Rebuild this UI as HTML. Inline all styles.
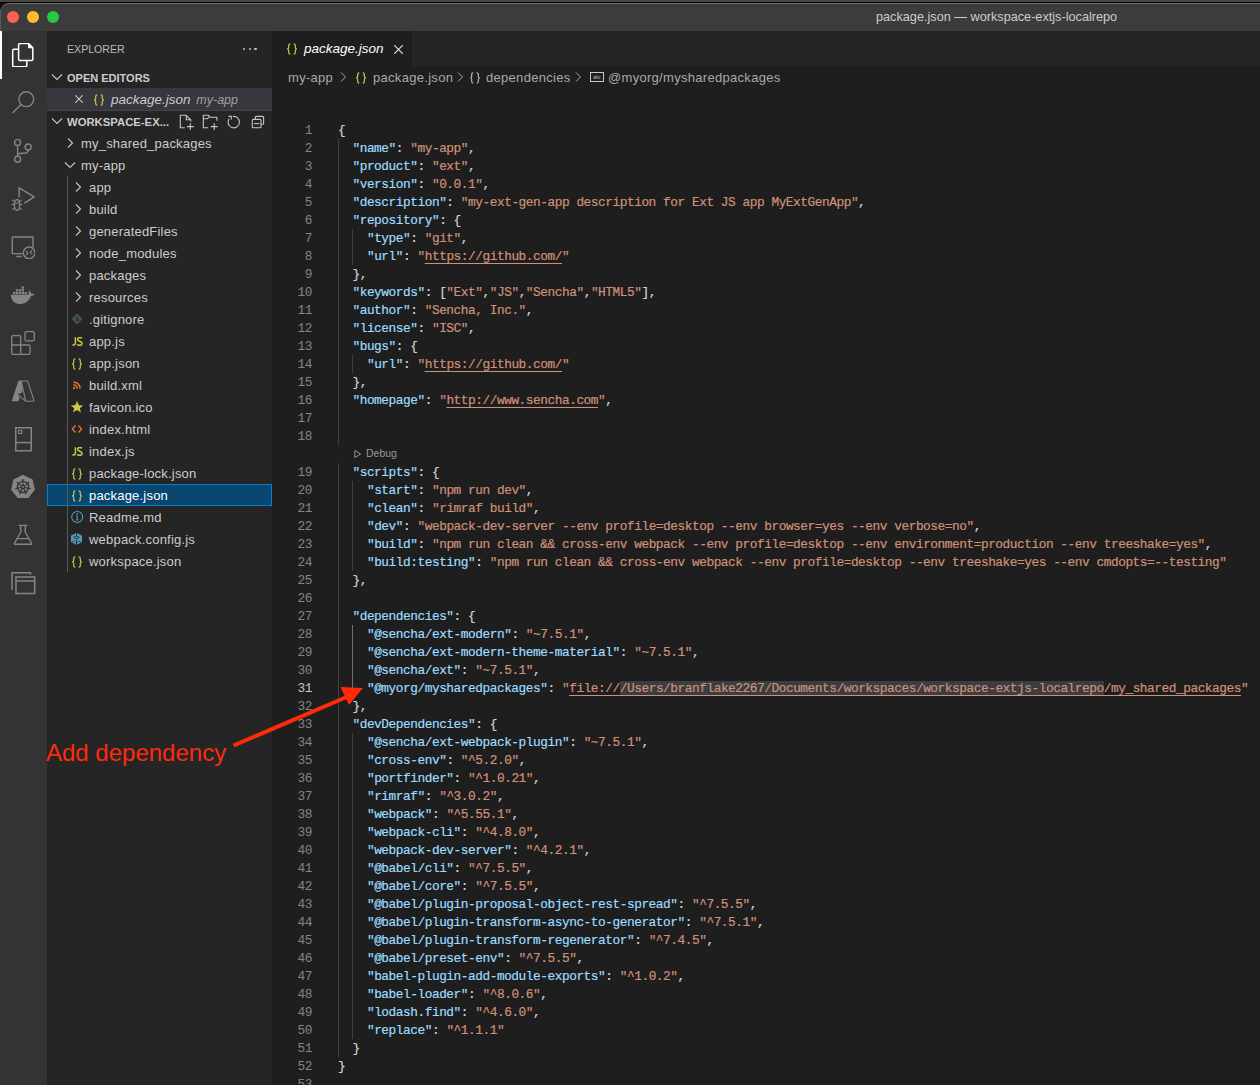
<!DOCTYPE html>
<html><head><meta charset="utf-8">
<style>
*{margin:0;padding:0;box-sizing:border-box}
html,body{width:1260px;height:1085px;overflow:hidden;background:#474747;font-family:"Liberation Sans",sans-serif}
.abs{position:absolute}
#topline{left:0;top:2px;width:1260px;height:1px;background:#000}
#win{left:0;top:3px;width:1260px;height:1082px;background:#3c3c3c;border-top-left-radius:9px;overflow:hidden;border-top:1px solid #6e6e6e;border-left:1px solid #5a5a5a}
#title{left:0;top:3px;width:1260px;height:28px}
.tl{position:absolute;top:8px;width:12px;height:12px;border-radius:50%}
#tt{position:absolute;left:876px;top:7px;font-size:12.7px;color:#cccccc;white-space:nowrap}
#act{left:0;top:31px;width:47px;height:1054px;background:#333333}
#side{left:47px;top:31px;width:225px;height:1054px;background:#252526;color:#cccccc}
#ed{left:272px;top:31px;width:988px;height:1054px;background:#1e1e1e;overflow:hidden}
#tabs{left:0;top:0;width:988px;height:35px;background:#252526}
#tab{left:0;top:0;width:140px;height:35px;background:#1e1e1e}
.row{position:absolute;left:0;height:22px;line-height:22px;font-size:13px;white-space:nowrap}
.ln{position:absolute;left:0;width:40px;text-align:right;font-family:"Liberation Mono",monospace;font-size:12.8px;letter-spacing:-0.456px;color:#858585;height:18px;line-height:18px;padding-top:2px}
.ln.act{color:#c6c6c6}
.cl{position:absolute;left:66px;height:18px;line-height:18px;font-family:"Liberation Mono",monospace;font-size:12.8px;letter-spacing:-0.456px;white-space:pre;color:#d4d4d4;padding-top:2px;-webkit-text-stroke:0.2px currentColor}
.k{color:#9cdcfe}.s{color:#ce9178}.u{text-decoration:underline;text-underline-offset:3px;text-decoration-skip-ink:none}
.sel{background:#3a3d41}
.ig{position:absolute;width:1px;background:#404040}
.ic{position:absolute;font-family:"Liberation Mono",monospace;font-weight:bold}
</style></head><body>
<div id="topline" class="abs"></div>
<div class="abs" style="left:0;top:3px;width:14px;height:14px;background:#111111"></div>
<div id="win" class="abs"></div>
<div id="title" class="abs">
  <div class="tl" style="left:7px;background:#fe5f57"></div>
  <div class="tl" style="left:27px;background:#febc2e"></div>
  <div class="tl" style="left:47px;background:#28c840"></div>
  <div id="tt">package.json — workspace-extjs-localrepo</div>
</div>
<div id="act" class="abs">
<div class="abs" style="left:0;top:0;width:1.5px;height:48px;background:#ffffff"></div>
<svg class="abs" style="left:11px;top:12px" width="24" height="24" viewBox="0 0 24 24" fill="none" stroke="#ffffff" stroke-width="1.5" stroke-linejoin="round"><path d="M7.6 6.3 H2.9 A1.2 1.2 0 0 0 1.7 7.5 V22.6 A1.2 1.2 0 0 0 2.9 23.8 H14.6 A1.2 1.2 0 0 0 15.8 22.6 V17.6"/><path d="M8.8 0.6 H17.6 L21.8 4.8 V16.3 A1.2 1.2 0 0 1 20.6 17.5 H8.8 A1.2 1.2 0 0 1 7.6 16.3 V1.8 A1.2 1.2 0 0 1 8.8 0.6 Z"/><path d="M17.6 0.6 V4.8 H21.8 Z" fill="#ffffff" stroke-width="1"/></svg>
<svg class="abs" style="left:11px;top:60px" width="24" height="24" viewBox="0 0 24 24" fill="none" stroke="#858585" stroke-width="1.4"><circle cx="15.3" cy="8.2" r="7.4"/><path d="M10 13.5 L1.5 22"/></svg>
<svg class="abs" style="left:11px;top:108px" width="24" height="24" viewBox="0 0 24 24" fill="none" stroke="#858585" stroke-width="1.4"><circle cx="6.6" cy="3.4" r="3"/><circle cx="6.6" cy="20.2" r="3"/><circle cx="17.2" cy="8" r="3"/><path d="M6.6 6.4 V17.2 M17.2 11 C17.2 14 15 14.3 11 14.3 C8.5 14.3 6.6 15 6.6 17"/></svg>
<svg class="abs" style="left:11px;top:156px" width="24" height="24" viewBox="0 0 24 24" fill="none" stroke="#858585" stroke-width="1.4"><path d="M8.1 10.6 V0.8 L23.3 9.8 L13.3 16.2"/><path d="M3.3 17.8 C3.3 14.6 4.5 12.8 6 12.8 C7.5 12.8 8.7 14.6 8.7 17.8 C8.7 21 7.5 23.2 6 23.2 C4.5 23.2 3.3 21 3.3 17.8 Z"/><path d="M3.2 17.5 H0.5 M8.8 17.5 H11.5 M3.6 14.6 L1.2 13 M8.4 14.6 L10.8 13 M3.6 21 L1.2 22.8 M8.4 21 L10.8 22.8 M3.8 16 H8.2" stroke-width="1.1"/></svg>
<svg class="abs" style="left:11px;top:204px" width="24" height="24" viewBox="0 0 24 24" fill="none" stroke="#858585" stroke-width="1.4" stroke-linejoin="round"><path d="M11.5 18.6 H1.3 V2 H22 V12.5"/><path d="M5.2 21.5 H10.6"/><circle cx="18.1" cy="17.8" r="5.8"/><path d="M15 16.2 L17 18.2 L15 20.2 M21.2 15.4 L19.2 17.4 L21.2 19.4" stroke-width="1.1"/></svg>
<svg class="abs" style="left:10px;top:252px" width="26" height="24" viewBox="0 0 26 24"><path d="M0.8 11.8 H18.6 C18.4 10.2 18.6 8.5 19.3 7.2 C20.3 8.2 20.8 9.5 20.8 10.6 C22 10.2 23.5 10.5 24.6 11.2 C23.6 12.3 22.2 12.8 21 12.9 C19 18.5 14.8 20.9 9.5 20.9 C4.3 20.9 1.2 17.5 0.8 11.8 Z" fill="#858585"/><g fill="#858585"><rect x="2.9" y="9" width="2.4" height="2.3"/><rect x="5.8" y="9" width="2.4" height="2.3"/><rect x="8.7" y="9" width="2.4" height="2.3"/><rect x="11.6" y="9" width="2.4" height="2.3"/><rect x="14.5" y="9" width="2.4" height="2.3"/><rect x="5.8" y="6.2" width="2.4" height="2.3"/><rect x="8.7" y="6.2" width="2.4" height="2.3"/><rect x="11.6" y="6.2" width="2.4" height="2.3"/><rect x="11.6" y="3.4" width="2.4" height="2.3"/></g></svg>
<svg class="abs" style="left:11px;top:300px" width="24" height="24" viewBox="0 0 24 24" fill="none" stroke="#858585" stroke-width="1.3"><path d="M1.9 4.7 H8.5 A1.2 1.2 0 0 1 9.7 5.9 V14 H17.8 A1.2 1.2 0 0 1 19 15.2 V22.1 A1.2 1.2 0 0 1 17.8 23.3 H1.9 A1.2 1.2 0 0 1 0.7 22.1 V5.9 A1.2 1.2 0 0 1 1.9 4.7 Z M0.7 14 H9.7 V23.3"/><rect x="14" y="0.6" width="9.3" height="9.3" rx="1.5"/></svg>
<svg class="abs" style="left:8px;top:344px" width="30" height="30" viewBox="0 0 30 30"><path d="M10.3 6.2 H13 L14.7 15.5 L13.3 18.2 L9.1 19.1 L11.6 23 L10.3 26.3 H4.6 Q3.7 26.3 4 25.3 Z" fill="#858585"/><path d="M10.5 6 H19.2 Q19.6 6 19.8 6.6 L26 25.5 Q26.2 26.2 25.5 26.2 H17.7 L13.3 6.2 M9.1 19.1 L17.7 26.2" fill="none" stroke="#858585" stroke-width="1.1" stroke-linejoin="round"/></svg>
<svg class="abs" style="left:11px;top:396px" width="24" height="25" viewBox="0 0 24 25" fill="none" stroke="#858585" stroke-width="1.5"><rect x="4.75" y="0.75" width="15.5" height="23"/><path d="M4.75 15.6 H20.25"/><rect x="7.6" y="3.3" width="3.2" height="3.2" stroke-width="1.1"/></svg>
<svg class="abs" style="left:10px;top:443px" width="26" height="26" viewBox="0 0 26 26"><polygon points="13.00,1.60 21.91,5.89 24.11,15.54 17.95,23.27 8.05,23.27 1.89,15.54 4.09,5.89" fill="#858585" stroke="#858585" stroke-width="1.5" stroke-linejoin="round"/><g fill="none" stroke="#333333" stroke-width="1.2"><circle cx="13" cy="13" r="5.6" stroke-width="1.4"/><circle cx="13" cy="13" r="1.6"/><path d="M13.00 11.20 L13.00 5.00 M14.41 11.88 L19.25 8.01 M14.75 13.40 L20.80 14.78 M13.78 14.62 L16.47 20.21 M12.22 14.62 L9.53 20.21 M11.25 13.40 L5.20 14.78 M11.59 11.88 L6.75 8.01 "/></g></svg>
<svg class="abs" style="left:11px;top:492px" width="24" height="24" viewBox="0 0 24 24" fill="none" stroke="#858585" stroke-width="1.4" stroke-linejoin="round"><path d="M7.5 2.4 H16.3 M9.8 2.4 V9 L3.6 20 Q3.1 21.3 4.6 21.3 H19.4 Q20.9 21.3 20.4 20 L14.2 9 V2.4 M6.4 15.6 H17.6"/></svg>
<svg class="abs" style="left:11px;top:540px" width="25" height="24" viewBox="0 0 25 24" fill="none" stroke="#858585" stroke-width="1.5"><path d="M1 18.7 V1.7 H19.5 V3.5"/><rect x="5" y="6" width="18.7" height="16.5"/><path d="M5 10 H23.7"/></svg>
</div><div id="side" class="abs">
<div class="row" style="top:1px;height:35px;line-height:35px;left:20px;font-size:10.6px;color:#bbbbbb">EXPLORER</div>
<div class="abs" style="left:196.0px;top:17px;width:2.4px;height:2.4px;border-radius:50%;background:#c5c5c5"></div>
<div class="abs" style="left:201.6px;top:17px;width:2.4px;height:2.4px;border-radius:50%;background:#c5c5c5"></div>
<div class="abs" style="left:207.2px;top:17px;width:2.4px;height:2.4px;border-radius:50%;background:#c5c5c5"></div>
<svg class="abs" style="left:2px;top:38px" width="16" height="16" viewBox="0 0 16 16"><path d="M3 5.5 L8 10.5 L13 5.5" fill="none" stroke="#c5c5c5" stroke-width="1.1"/></svg>
<div class="row" style="top:36px;left:20px;font-size:11px;font-weight:bold;color:#cccccc">OPEN EDITORS</div>
<div class="abs" style="left:0;top:57px;width:225px;height:22px;background:#37373d"></div>
<div class="abs" style="left:0;top:79px;width:225px;height:1px;background:#444448"></div>
<svg class="abs" style="left:28px;top:64px" width="8" height="8" viewBox="0 0 8 8"><path d="M0.3 0.3 L7.7 7.7 M7.7 0.3 L0.3 7.7" fill="none" stroke="#c5c5c5" stroke-width="1.1"/></svg>
<svg class="abs" style="left:46px;top:63px" width="12" height="12" viewBox="0 0 12 12" fill="none" stroke="#cbcb41" stroke-width="1.2"><path d="M4.3 0.8 C3.1 0.8 2.7 1.4 2.7 2.4 V4.5 C2.7 5.4 2.1 5.9 1.1 6 C2.1 6.1 2.7 6.6 2.7 7.5 V9.6 C2.7 10.6 3.1 11.2 4.3 11.2"/><path d="M7.7 0.8 C8.9 0.8 9.3 1.4 9.3 2.4 V4.5 C9.3 5.4 9.9 5.9 10.9 6 C9.9 6.1 9.3 6.6 9.3 7.5 V9.6 C9.3 10.6 8.9 11.2 7.7 11.2"/></svg>
<div class="row" style="top:58px;left:64px;font-style:italic;font-size:13.5px;color:#cccccc">package.json <span style="font-size:12.5px;color:#a0a0a0;margin-left:2px">my-app</span></div>
<svg class="abs" style="left:2px;top:82px" width="16" height="16" viewBox="0 0 16 16"><path d="M3 5.5 L8 10.5 L13 5.5" fill="none" stroke="#c5c5c5" stroke-width="1.1"/></svg>
<div class="row" style="top:80px;left:20px;font-size:11.3px;font-weight:bold;color:#cccccc">WORKSPACE-EX...</div>
<svg class="abs" style="left:130px;top:82px" width="18" height="18" viewBox="0 0 18 18" fill="none" stroke="#c5c5c5" stroke-width="1.1" stroke-linejoin="round"><path d="M7.8 14.7 H3.3 V2.3 H9.3 L13.8 6.8 V8.6 M9.3 2.3 V6.8 H13.8 M13.3 10.2 V17 M9.9 13.6 H16.8"/></svg>
<svg class="abs" style="left:154px;top:82px" width="18" height="18" viewBox="0 0 18 18" fill="none" stroke="#c5c5c5" stroke-width="1.1" stroke-linejoin="round"><path d="M7.2 14.7 H2.3 V2.3 H7.5 L9 4.2 H15.9 V7.8 M2.3 5.7 H6.5 L8 4.2 M13.2 10.2 V17 M9.8 13.6 H16.6"/></svg>
<svg class="abs" style="left:178px;top:82px" width="18" height="18" viewBox="0 0 18 18" fill="none" stroke="#c5c5c5" stroke-width="1.1"><path d="M7.8 3.5 A5.7 5.7 0 1 1 4.1 5.8 M3.4 3.4 H6.3 V6.5"/></svg>
<svg class="abs" style="left:202px;top:82px" width="18" height="18" viewBox="0 0 18 18" fill="none" stroke="#c5c5c5" stroke-width="1.1"><path d="M6.3 6.4 V4.4 Q6.3 3.4 7.3 3.4 H13.6 Q14.6 3.4 14.6 4.4 V10.3 Q14.6 11.3 13.6 11.3 H12"/><rect x="3.3" y="6.4" width="8.7" height="8.3" rx="1"/><path d="M4.9 10.6 H10.4"/></svg>
<svg class="abs" style="left:15px;top:104px" width="16" height="16" viewBox="0 0 16 16"><path d="M6 3.5 L10.5 8 L6 12.5" fill="none" stroke="#c5c5c5" stroke-width="1.1"/></svg>
<div class="row" style="top:102px;left:34px;color:#cccccc;letter-spacing:0.2px">my_shared_packages</div>
<svg class="abs" style="left:15px;top:126px" width="16" height="16" viewBox="0 0 16 16"><path d="M3 5.5 L8 10.5 L13 5.5" fill="none" stroke="#c5c5c5" stroke-width="1.1"/></svg>
<div class="row" style="top:124px;left:34px;color:#cccccc;letter-spacing:0.2px">my-app</div>
<svg class="abs" style="left:23px;top:148px" width="16" height="16" viewBox="0 0 16 16"><path d="M6 3.5 L10.5 8 L6 12.5" fill="none" stroke="#c5c5c5" stroke-width="1.1"/></svg>
<div class="row" style="top:146px;left:42px;color:#cccccc;letter-spacing:0.2px">app</div>
<svg class="abs" style="left:23px;top:170px" width="16" height="16" viewBox="0 0 16 16"><path d="M6 3.5 L10.5 8 L6 12.5" fill="none" stroke="#c5c5c5" stroke-width="1.1"/></svg>
<div class="row" style="top:168px;left:42px;color:#cccccc;letter-spacing:0.2px">build</div>
<svg class="abs" style="left:23px;top:192px" width="16" height="16" viewBox="0 0 16 16"><path d="M6 3.5 L10.5 8 L6 12.5" fill="none" stroke="#c5c5c5" stroke-width="1.1"/></svg>
<div class="row" style="top:190px;left:42px;color:#cccccc;letter-spacing:0.2px">generatedFiles</div>
<svg class="abs" style="left:23px;top:214px" width="16" height="16" viewBox="0 0 16 16"><path d="M6 3.5 L10.5 8 L6 12.5" fill="none" stroke="#c5c5c5" stroke-width="1.1"/></svg>
<div class="row" style="top:212px;left:42px;color:#cccccc;letter-spacing:0.2px">node_modules</div>
<svg class="abs" style="left:23px;top:236px" width="16" height="16" viewBox="0 0 16 16"><path d="M6 3.5 L10.5 8 L6 12.5" fill="none" stroke="#c5c5c5" stroke-width="1.1"/></svg>
<div class="row" style="top:234px;left:42px;color:#cccccc;letter-spacing:0.2px">packages</div>
<svg class="abs" style="left:23px;top:258px" width="16" height="16" viewBox="0 0 16 16"><path d="M6 3.5 L10.5 8 L6 12.5" fill="none" stroke="#c5c5c5" stroke-width="1.1"/></svg>
<div class="row" style="top:256px;left:42px;color:#cccccc;letter-spacing:0.2px">resources</div>
<svg class="abs" style="left:24px;top:280px" width="12" height="16" viewBox="0 0 12 16"><path d="M6 2.5 L11.5 8 L6 13.5 L0.5 8 Z" fill="#41535b"/><path d="M4.6 5.5 L7.6 8.6 M5.6 6.6 V10.5 M7.6 8.6 V10" stroke="#252526" stroke-width="0.9" fill="none"/></svg>
<div class="row" style="top:278px;left:42px;color:#cccccc;letter-spacing:0.2px">.gitignore</div>
<svg class="abs" style="left:24.5px;top:305.5px" width="11" height="9" viewBox="0 0 11 9" fill="none" stroke="#cbcb41" stroke-width="1.5"><path d="M3.4 0.3 V5.8 C3.4 7.6 2.5 8.2 0.4 8.0"/><path d="M9.9 1.3 C9.3 0.7 8.5 0.5 7.7 0.5 C6.4 0.5 5.5 1.2 5.5 2.3 C5.5 4.6 10.1 3.8 10.1 6.2 C10.1 7.5 9.1 8.3 7.7 8.3 C6.7 8.3 5.8 7.9 5.2 7.2"/></svg>
<div class="row" style="top:300px;left:42px;color:#cccccc;letter-spacing:0.2px">app.js</div>
<svg class="abs" style="left:24px;top:327px" width="12" height="12" viewBox="0 0 12 12" fill="none" stroke="#cbcb41" stroke-width="1.2"><path d="M4.3 0.8 C3.1 0.8 2.7 1.4 2.7 2.4 V4.5 C2.7 5.4 2.1 5.9 1.1 6 C2.1 6.1 2.7 6.6 2.7 7.5 V9.6 C2.7 10.6 3.1 11.2 4.3 11.2"/><path d="M7.7 0.8 C8.9 0.8 9.3 1.4 9.3 2.4 V4.5 C9.3 5.4 9.9 5.9 10.9 6 C9.9 6.1 9.3 6.6 9.3 7.5 V9.6 C9.3 10.6 8.9 11.2 7.7 11.2"/></svg>
<div class="row" style="top:322px;left:42px;color:#cccccc;letter-spacing:0.2px">app.json</div>
<svg class="abs" style="left:24px;top:346px" width="12" height="16" viewBox="0 0 12 16" fill="none" stroke="#e37933" stroke-width="1.5"><path d="M2.5 5.2 A6 6 0 0 1 9 11.7 M2.5 8 A3.4 3.4 0 0 1 6.2 11.7"/><circle cx="3" cy="11.2" r="1.1" fill="#e37933" stroke="none"/></svg>
<div class="row" style="top:344px;left:42px;color:#cccccc;letter-spacing:0.2px">build.xml</div>
<svg class="abs" style="left:23px;top:368px" width="14" height="16" viewBox="0 0 14 16"><path d="M7 2 L8.8 6.2 L13.2 6.4 L9.8 9.2 L11 13.6 L7 11.1 L3 13.6 L4.2 9.2 L0.8 6.4 L5.2 6.2 Z" fill="#cbcb41"/></svg>
<div class="row" style="top:366px;left:42px;color:#cccccc;letter-spacing:0.2px">favicon.ico</div>
<svg class="abs" style="left:24px;top:390px" width="12" height="16" viewBox="0 0 12 16" fill="none" stroke="#e37933" stroke-width="1.3"><path d="M4.5 4.5 L1.3 8 L4.5 11.5 M7.5 4.5 L10.7 8 L7.5 11.5"/></svg>
<div class="row" style="top:388px;left:42px;color:#cccccc;letter-spacing:0.2px">index.html</div>
<svg class="abs" style="left:24.5px;top:415.5px" width="11" height="9" viewBox="0 0 11 9" fill="none" stroke="#cbcb41" stroke-width="1.5"><path d="M3.4 0.3 V5.8 C3.4 7.6 2.5 8.2 0.4 8.0"/><path d="M9.9 1.3 C9.3 0.7 8.5 0.5 7.7 0.5 C6.4 0.5 5.5 1.2 5.5 2.3 C5.5 4.6 10.1 3.8 10.1 6.2 C10.1 7.5 9.1 8.3 7.7 8.3 C6.7 8.3 5.8 7.9 5.2 7.2"/></svg>
<div class="row" style="top:410px;left:42px;color:#cccccc;letter-spacing:0.2px">index.js</div>
<svg class="abs" style="left:24px;top:437px" width="12" height="12" viewBox="0 0 12 12" fill="none" stroke="#cbcb41" stroke-width="1.2"><path d="M4.3 0.8 C3.1 0.8 2.7 1.4 2.7 2.4 V4.5 C2.7 5.4 2.1 5.9 1.1 6 C2.1 6.1 2.7 6.6 2.7 7.5 V9.6 C2.7 10.6 3.1 11.2 4.3 11.2"/><path d="M7.7 0.8 C8.9 0.8 9.3 1.4 9.3 2.4 V4.5 C9.3 5.4 9.9 5.9 10.9 6 C9.9 6.1 9.3 6.6 9.3 7.5 V9.6 C9.3 10.6 8.9 11.2 7.7 11.2"/></svg>
<div class="row" style="top:432px;left:42px;color:#cccccc;letter-spacing:0.2px">package-lock.json</div>
<div class="abs" style="left:0;top:453px;width:225px;height:22px;background:#094771;border:1px solid #007fd4"></div>
<svg class="abs" style="left:24px;top:459px" width="12" height="12" viewBox="0 0 12 12" fill="none" stroke="#cbcb41" stroke-width="1.2"><path d="M4.3 0.8 C3.1 0.8 2.7 1.4 2.7 2.4 V4.5 C2.7 5.4 2.1 5.9 1.1 6 C2.1 6.1 2.7 6.6 2.7 7.5 V9.6 C2.7 10.6 3.1 11.2 4.3 11.2"/><path d="M7.7 0.8 C8.9 0.8 9.3 1.4 9.3 2.4 V4.5 C9.3 5.4 9.9 5.9 10.9 6 C9.9 6.1 9.3 6.6 9.3 7.5 V9.6 C9.3 10.6 8.9 11.2 7.7 11.2"/></svg>
<div class="row" style="top:454px;left:42px;color:#ffffff;letter-spacing:0.2px">package.json</div>
<svg class="abs" style="left:24px;top:478px" width="13" height="16" viewBox="0 0 13 16" fill="none" stroke="#519aba" stroke-width="1.1"><circle cx="6.2" cy="8" r="5.5"/><path d="M6.2 6.8 V11 M5 11 H7.4 M5 6.8 H6.2" /><circle cx="6.2" cy="4.9" r="0.8" fill="#519aba" stroke="none"/></svg>
<div class="row" style="top:476px;left:42px;color:#cccccc;letter-spacing:0.2px">Readme.md</div>
<svg class="abs" style="left:24px;top:500px" width="12" height="16" viewBox="0 0 12 16"><path d="M5.5 1.7 L11 4.8 V11 L5.5 14.1 L0 11 V4.8 Z" fill="#519aba"/><path d="M5.5 1.5 V4.7 M5.5 8.2 V14.3 M2.6 6.4 L5.5 4.9 L8.4 6.4 L5.5 7.9 Z M1.4 10.4 H3.2 M7.8 10.4 H9.6 M4.3 11.3 H6.7" fill="none" stroke="#252526" stroke-width="0.85"/></svg>
<div class="row" style="top:498px;left:42px;color:#cccccc;letter-spacing:0.2px">webpack.config.js</div>
<svg class="abs" style="left:24px;top:525px" width="12" height="12" viewBox="0 0 12 12" fill="none" stroke="#cbcb41" stroke-width="1.2"><path d="M4.3 0.8 C3.1 0.8 2.7 1.4 2.7 2.4 V4.5 C2.7 5.4 2.1 5.9 1.1 6 C2.1 6.1 2.7 6.6 2.7 7.5 V9.6 C2.7 10.6 3.1 11.2 4.3 11.2"/><path d="M7.7 0.8 C8.9 0.8 9.3 1.4 9.3 2.4 V4.5 C9.3 5.4 9.9 5.9 10.9 6 C9.9 6.1 9.3 6.6 9.3 7.5 V9.6 C9.3 10.6 8.9 11.2 7.7 11.2"/></svg>
<div class="row" style="top:520px;left:42px;color:#cccccc;letter-spacing:0.2px">workspace.json</div>
<div class="abs" style="left:20px;top:145px;width:1px;height:396px;background:#585858"></div>
</div><div id="ed" class="abs"><div id="tabs" class="abs"></div><div id="tab" class="abs"></div>
<svg class="abs" style="left:14px;top:12px" width="12" height="12" viewBox="0 0 12 12" fill="none" stroke="#cbcb41" stroke-width="1.2"><path d="M4.3 0.8 C3.1 0.8 2.7 1.4 2.7 2.4 V4.5 C2.7 5.4 2.1 5.9 1.1 6 C2.1 6.1 2.7 6.6 2.7 7.5 V9.6 C2.7 10.6 3.1 11.2 4.3 11.2"/><path d="M7.7 0.8 C8.9 0.8 9.3 1.4 9.3 2.4 V4.5 C9.3 5.4 9.9 5.9 10.9 6 C9.9 6.1 9.3 6.6 9.3 7.5 V9.6 C9.3 10.6 8.9 11.2 7.7 11.2"/></svg>
<div class="abs" style="left:32px;top:0;line-height:35px;font-size:13.5px;font-style:italic;color:#ffffff;white-space:nowrap">package.json</div>
<svg class="abs" style="left:122px;top:14px" width="9" height="9" viewBox="0 0 9 9"><path d="M0.3 0.3 L8.7 8.7 M8.7 0.3 L0.3 8.7" fill="none" stroke="#e0e0e0" stroke-width="1.2"/></svg>
<div style="position:absolute;top:36px;height:22px;line-height:22px;font-size:13px;color:#a9a9a9;white-space:nowrap;letter-spacing:0.3px;left:16px">my-app</div>
<svg class="abs" style="left:63px;top:38px" width="16" height="16" viewBox="0 0 16 16"><path d="M6 3.5 L10.5 8 L6 12.5" fill="none" stroke="#a9a9a9" stroke-width="1"/></svg>
<svg class="abs" style="left:83px;top:41px" width="12" height="12" viewBox="0 0 12 12" fill="none" stroke="#cbcb41" stroke-width="1.2"><path d="M4.3 0.8 C3.1 0.8 2.7 1.4 2.7 2.4 V4.5 C2.7 5.4 2.1 5.9 1.1 6 C2.1 6.1 2.7 6.6 2.7 7.5 V9.6 C2.7 10.6 3.1 11.2 4.3 11.2"/><path d="M7.7 0.8 C8.9 0.8 9.3 1.4 9.3 2.4 V4.5 C9.3 5.4 9.9 5.9 10.9 6 C9.9 6.1 9.3 6.6 9.3 7.5 V9.6 C9.3 10.6 8.9 11.2 7.7 11.2"/></svg>
<div style="position:absolute;top:36px;height:22px;line-height:22px;font-size:13px;color:#a9a9a9;white-space:nowrap;letter-spacing:0.3px;left:101px">package.json</div>
<svg class="abs" style="left:180px;top:38px" width="16" height="16" viewBox="0 0 16 16"><path d="M6 3.5 L10.5 8 L6 12.5" fill="none" stroke="#a9a9a9" stroke-width="1"/></svg>
<svg class="abs" style="left:197px;top:41px" width="12" height="12" viewBox="0 0 12 12" fill="none" stroke="#c5c5c5" stroke-width="1.1"><path d="M4.3 0.8 C3.1 0.8 2.7 1.4 2.7 2.4 V4.5 C2.7 5.4 2.1 5.9 1.1 6 C2.1 6.1 2.7 6.6 2.7 7.5 V9.6 C2.7 10.6 3.1 11.2 4.3 11.2"/><path d="M7.7 0.8 C8.9 0.8 9.3 1.4 9.3 2.4 V4.5 C9.3 5.4 9.9 5.9 10.9 6 C9.9 6.1 9.3 6.6 9.3 7.5 V9.6 C9.3 10.6 8.9 11.2 7.7 11.2"/></svg>
<div style="position:absolute;top:36px;height:22px;line-height:22px;font-size:13px;color:#a9a9a9;white-space:nowrap;letter-spacing:0.3px;left:214px">dependencies</div>
<svg class="abs" style="left:298px;top:38px" width="16" height="16" viewBox="0 0 16 16"><path d="M6 3.5 L10.5 8 L6 12.5" fill="none" stroke="#a9a9a9" stroke-width="1"/></svg>
<svg class="abs" style="left:318px;top:39px" width="14" height="14" viewBox="0 0 14 14"><rect x="0.5" y="2.5" width="13" height="9" fill="none" stroke="#c5c5c5" stroke-width="1"/><text x="7" y="8.8" font-size="4.5" fill="#c5c5c5" text-anchor="middle" font-family="Liberation Sans">abc</text></svg>
<div style="position:absolute;top:36px;height:22px;line-height:22px;font-size:13px;color:#a9a9a9;white-space:nowrap;letter-spacing:0.3px;left:336px">@myorg/mysharedpackages</div>
<svg class="abs" style="left:81px;top:418px" width="10" height="10" viewBox="0 0 10 10"><path d="M1.8 1.5 L7.6 5 L1.8 8.5 Z" fill="none" stroke="#999999" stroke-width="1"/></svg>
<div class="abs" style="left:94px;top:413px;line-height:18px;font-size:10.5px;color:#999999;white-space:nowrap">Debug</div><div class="ig" style="left:66px;top:108px;height:306px;background:#404040"></div>
<div class="ig" style="left:66px;top:432px;height:594px;background:#404040"></div>
<div class="ig" style="left:80px;top:198px;height:36px;background:#404040"></div>
<div class="ig" style="left:80px;top:324px;height:18px;background:#404040"></div>
<div class="ig" style="left:80px;top:450px;height:90px;background:#404040"></div>
<div class="ig" style="left:80px;top:594px;height:72px;background:#707070"></div>
<div class="ig" style="left:80px;top:702px;height:306px;background:#404040"></div><div class="ln" style="top:89px">1</div>
<div class="cl" style="top:89px">{</div>
<div class="ln" style="top:107px">2</div>
<div class="cl" style="top:107px">  <span class="k">&quot;name&quot;</span>: <span class="s">&quot;my-app&quot;</span>,</div>
<div class="ln" style="top:125px">3</div>
<div class="cl" style="top:125px">  <span class="k">&quot;product&quot;</span>: <span class="s">&quot;ext&quot;</span>,</div>
<div class="ln" style="top:143px">4</div>
<div class="cl" style="top:143px">  <span class="k">&quot;version&quot;</span>: <span class="s">&quot;0.0.1&quot;</span>,</div>
<div class="ln" style="top:161px">5</div>
<div class="cl" style="top:161px">  <span class="k">&quot;description&quot;</span>: <span class="s">&quot;my-ext-gen-app description for Ext JS app MyExtGenApp&quot;</span>,</div>
<div class="ln" style="top:179px">6</div>
<div class="cl" style="top:179px">  <span class="k">&quot;repository&quot;</span>: {</div>
<div class="ln" style="top:197px">7</div>
<div class="cl" style="top:197px">    <span class="k">&quot;type&quot;</span>: <span class="s">&quot;git&quot;</span>,</div>
<div class="ln" style="top:215px">8</div>
<div class="cl" style="top:215px">    <span class="k">&quot;url&quot;</span>: <span class="s">"<span class="u">https://github.com/</span>"</span></div>
<div class="ln" style="top:233px">9</div>
<div class="cl" style="top:233px">  },</div>
<div class="ln" style="top:251px">10</div>
<div class="cl" style="top:251px">  <span class="k">&quot;keywords&quot;</span>: [<span class="s">&quot;Ext&quot;</span>,<span class="s">&quot;JS&quot;</span>,<span class="s">&quot;Sencha&quot;</span>,<span class="s">&quot;HTML5&quot;</span>],</div>
<div class="ln" style="top:269px">11</div>
<div class="cl" style="top:269px">  <span class="k">&quot;author&quot;</span>: <span class="s">&quot;Sencha, Inc.&quot;</span>,</div>
<div class="ln" style="top:287px">12</div>
<div class="cl" style="top:287px">  <span class="k">&quot;license&quot;</span>: <span class="s">&quot;ISC&quot;</span>,</div>
<div class="ln" style="top:305px">13</div>
<div class="cl" style="top:305px">  <span class="k">&quot;bugs&quot;</span>: {</div>
<div class="ln" style="top:323px">14</div>
<div class="cl" style="top:323px">    <span class="k">&quot;url&quot;</span>: <span class="s">"<span class="u">https://github.com/</span>"</span></div>
<div class="ln" style="top:341px">15</div>
<div class="cl" style="top:341px">  },</div>
<div class="ln" style="top:359px">16</div>
<div class="cl" style="top:359px">  <span class="k">&quot;homepage&quot;</span>: <span class="s">"<span class="u">http://www.sencha.com</span>"</span>,</div>
<div class="ln" style="top:377px">17</div>
<div class="ln" style="top:395px">18</div>
<div class="ln" style="top:431px">19</div>
<div class="cl" style="top:431px">  <span class="k">&quot;scripts&quot;</span>: {</div>
<div class="ln" style="top:449px">20</div>
<div class="cl" style="top:449px">    <span class="k">&quot;start&quot;</span>: <span class="s">&quot;npm run dev&quot;</span>,</div>
<div class="ln" style="top:467px">21</div>
<div class="cl" style="top:467px">    <span class="k">&quot;clean&quot;</span>: <span class="s">&quot;rimraf build&quot;</span>,</div>
<div class="ln" style="top:485px">22</div>
<div class="cl" style="top:485px">    <span class="k">&quot;dev&quot;</span>: <span class="s">&quot;webpack-dev-server --env profile=desktop --env browser=yes --env verbose=no&quot;</span>,</div>
<div class="ln" style="top:503px">23</div>
<div class="cl" style="top:503px">    <span class="k">&quot;build&quot;</span>: <span class="s">&quot;npm run clean &amp;&amp; cross-env webpack --env profile=desktop --env environment=production --env treeshake=yes&quot;</span>,</div>
<div class="ln" style="top:521px">24</div>
<div class="cl" style="top:521px">    <span class="k">&quot;build:testing&quot;</span>: <span class="s">&quot;npm run clean &amp;&amp; cross-env webpack --env profile=desktop --env treeshake=yes --env cmdopts=--testing&quot;</span></div>
<div class="ln" style="top:539px">25</div>
<div class="cl" style="top:539px">  },</div>
<div class="ln" style="top:557px">26</div>
<div class="ln" style="top:575px">27</div>
<div class="cl" style="top:575px">  <span class="k">&quot;dependencies&quot;</span>: {</div>
<div class="ln" style="top:593px">28</div>
<div class="cl" style="top:593px">    <span class="k">&quot;@sencha/ext-modern&quot;</span>: <span class="s">&quot;~7.5.1&quot;</span>,</div>
<div class="ln" style="top:611px">29</div>
<div class="cl" style="top:611px">    <span class="k">&quot;@sencha/ext-modern-theme-material&quot;</span>: <span class="s">&quot;~7.5.1&quot;</span>,</div>
<div class="ln" style="top:629px">30</div>
<div class="cl" style="top:629px">    <span class="k">&quot;@sencha/ext&quot;</span>: <span class="s">&quot;~7.5.1&quot;</span>,</div>
<div class="ln act" style="top:647px">31</div>
<div class="cl" style="top:647px">    <span class="k">&quot;@myorg/mysharedpackages&quot;</span>: <span class="s">"<span class="u">file://<span class="sel">/Users/branflake2267/Documents/workspaces/workspace-extjs-localrepo</span>/my_shared_packages</span>"</span></div>
<div class="ln" style="top:665px">32</div>
<div class="cl" style="top:665px">  },</div>
<div class="ln" style="top:683px">33</div>
<div class="cl" style="top:683px">  <span class="k">&quot;devDependencies&quot;</span>: {</div>
<div class="ln" style="top:701px">34</div>
<div class="cl" style="top:701px">    <span class="k">&quot;@sencha/ext-webpack-plugin&quot;</span>: <span class="s">&quot;~7.5.1&quot;</span>,</div>
<div class="ln" style="top:719px">35</div>
<div class="cl" style="top:719px">    <span class="k">&quot;cross-env&quot;</span>: <span class="s">&quot;^5.2.0&quot;</span>,</div>
<div class="ln" style="top:737px">36</div>
<div class="cl" style="top:737px">    <span class="k">&quot;portfinder&quot;</span>: <span class="s">&quot;^1.0.21&quot;</span>,</div>
<div class="ln" style="top:755px">37</div>
<div class="cl" style="top:755px">    <span class="k">&quot;rimraf&quot;</span>: <span class="s">&quot;^3.0.2&quot;</span>,</div>
<div class="ln" style="top:773px">38</div>
<div class="cl" style="top:773px">    <span class="k">&quot;webpack&quot;</span>: <span class="s">&quot;^5.55.1&quot;</span>,</div>
<div class="ln" style="top:791px">39</div>
<div class="cl" style="top:791px">    <span class="k">&quot;webpack-cli&quot;</span>: <span class="s">&quot;^4.8.0&quot;</span>,</div>
<div class="ln" style="top:809px">40</div>
<div class="cl" style="top:809px">    <span class="k">&quot;webpack-dev-server&quot;</span>: <span class="s">&quot;^4.2.1&quot;</span>,</div>
<div class="ln" style="top:827px">41</div>
<div class="cl" style="top:827px">    <span class="k">&quot;@babel/cli&quot;</span>: <span class="s">&quot;^7.5.5&quot;</span>,</div>
<div class="ln" style="top:845px">42</div>
<div class="cl" style="top:845px">    <span class="k">&quot;@babel/core&quot;</span>: <span class="s">&quot;^7.5.5&quot;</span>,</div>
<div class="ln" style="top:863px">43</div>
<div class="cl" style="top:863px">    <span class="k">&quot;@babel/plugin-proposal-object-rest-spread&quot;</span>: <span class="s">&quot;^7.5.5&quot;</span>,</div>
<div class="ln" style="top:881px">44</div>
<div class="cl" style="top:881px">    <span class="k">&quot;@babel/plugin-transform-async-to-generator&quot;</span>: <span class="s">&quot;^7.5.1&quot;</span>,</div>
<div class="ln" style="top:899px">45</div>
<div class="cl" style="top:899px">    <span class="k">&quot;@babel/plugin-transform-regenerator&quot;</span>: <span class="s">&quot;^7.4.5&quot;</span>,</div>
<div class="ln" style="top:917px">46</div>
<div class="cl" style="top:917px">    <span class="k">&quot;@babel/preset-env&quot;</span>: <span class="s">&quot;^7.5.5&quot;</span>,</div>
<div class="ln" style="top:935px">47</div>
<div class="cl" style="top:935px">    <span class="k">&quot;babel-plugin-add-module-exports&quot;</span>: <span class="s">&quot;^1.0.2&quot;</span>,</div>
<div class="ln" style="top:953px">48</div>
<div class="cl" style="top:953px">    <span class="k">&quot;babel-loader&quot;</span>: <span class="s">&quot;^8.0.6&quot;</span>,</div>
<div class="ln" style="top:971px">49</div>
<div class="cl" style="top:971px">    <span class="k">&quot;lodash.find&quot;</span>: <span class="s">&quot;^4.6.0&quot;</span>,</div>
<div class="ln" style="top:989px">50</div>
<div class="cl" style="top:989px">    <span class="k">&quot;replace&quot;</span>: <span class="s">&quot;^1.1.1&quot;</span></div>
<div class="ln" style="top:1007px">51</div>
<div class="cl" style="top:1007px">  }</div>
<div class="ln" style="top:1025px">52</div>
<div class="cl" style="top:1025px">}</div>
<div class="ln" style="top:1043px">53</div></div><div class="abs" style="left:46px;top:735px;font-size:24px;line-height:36px;color:#ff2a0a;white-space:nowrap">Add dependency</div>
<svg class="abs" style="left:0;top:0" width="1260" height="1085" viewBox="0 0 1260 1085"><path d="M233.5 745.5 L349 696" stroke="#ff2a0a" stroke-width="4" fill="none"/><path d="M363 688 L340.5 687 L349 705 Z" fill="#ff2a0a"/></svg>
</body></html>
